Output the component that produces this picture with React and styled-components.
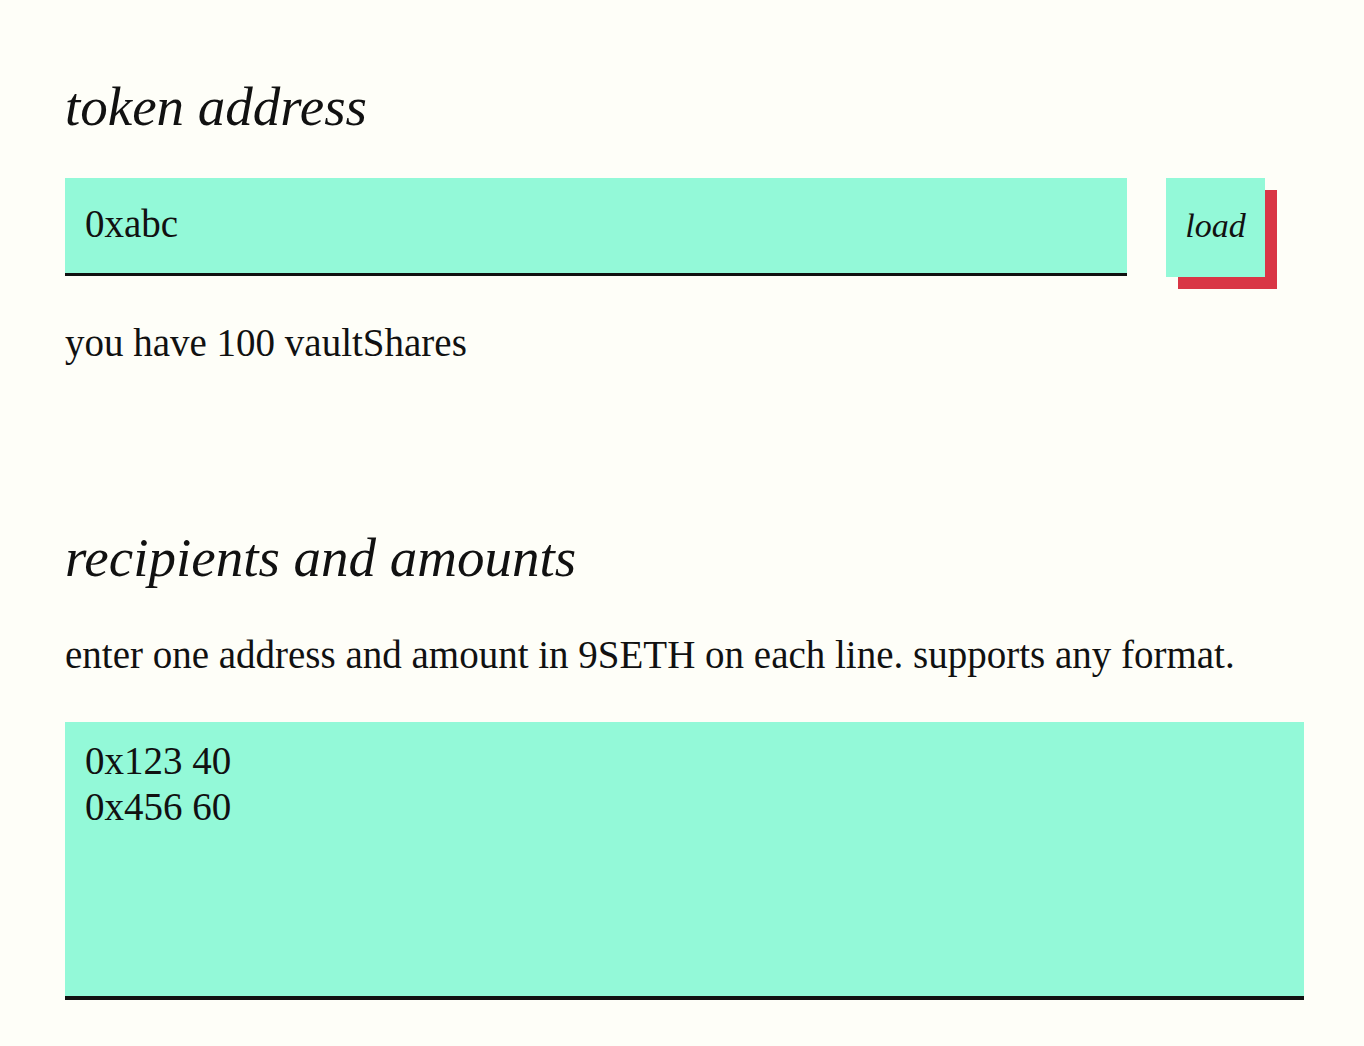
import React, { useState } from "react";
import styled, { createGlobalStyle } from "styled-components";

const GlobalStyle = createGlobalStyle`
  html, body {
    margin: 0;
    padding: 0;
    background: #fefef8;
  }
  body {
    font-family: "Liberation Serif", "Times New Roman", serif;
    color: #111;
  }
`;

const Page = styled.main`
  padding: 74px 60px 40px 65px;
`;

const Section = styled.section`
  display: flex;
  flex-direction: column;
  margin-bottom: ${(p) => p.$gap || 0}px;
`;

const Heading = styled.h2`
  margin: 0 0 ${(p) => p.$after}px 0;
  font-size: 55px;
  line-height: 65px;
  font-style: italic;
  font-weight: 400;
`;

const Text = styled.p`
  margin: 0 0 ${(p) => p.$after || 0}px 0;
  font-size: 39px;
  line-height: 46px;
`;

const InputRow = styled.div`
  display: grid;
  grid-template-columns: 1fr 99px;
  column-gap: 39px;
  padding-right: 39px;
  align-items: start;
  margin-bottom: 43px;
`;

const field = `
  box-sizing: border-box;
  width: 100%;
  border: none;
  outline: none;
  background: #93f9d8;
  font-family: "Liberation Serif", "Times New Roman", serif;
  font-size: 39px;
  color: #111;
`;

const AddressInput = styled.input`
  ${field}
  height: 98px;
  padding: 0 20px 4px;
  border-bottom: 3px solid #111;
`;

const LoadButton = styled.button`
  width: 99px;
  height: 99px;
  border: none;
  padding: 0 0 4px;
  background: #93f9d8;
  box-shadow: 12px 12px 0 #d93645;
  font-family: "Liberation Serif", "Times New Roman", serif;
  font-style: italic;
  font-size: 34px;
  color: #111;
  cursor: pointer;
`;

const Recipients = styled.textarea`
  ${field}
  display: block;
  height: 278px;
  padding: 16px 20px;
  line-height: 46px;
  resize: none;
  border-bottom: 4px solid #111;
`;

export default function App() {
  const [token, setToken] = useState("0xabc");
  const [list, setList] = useState("0x123 40\n0x456 60");

  return (
    <>
      <GlobalStyle />
      <Page>
        <Section $gap={159}>
          <Heading $after={39}>token address</Heading>
          <InputRow>
            <AddressInput value={token} onChange={(e) => setToken(e.target.value)} />
            <LoadButton>load</LoadButton>
          </InputRow>
          <Text>you have 100 vaultShares</Text>
        </Section>

        <Section>
          <Heading $after={42}>recipients and amounts</Heading>
          <Text $after={44}>
            enter one address and amount in 9SETH on each line. supports any format.
          </Text>
          <Recipients value={list} onChange={(e) => setList(e.target.value)} />
        </Section>
      </Page>
    </>
  );
}
